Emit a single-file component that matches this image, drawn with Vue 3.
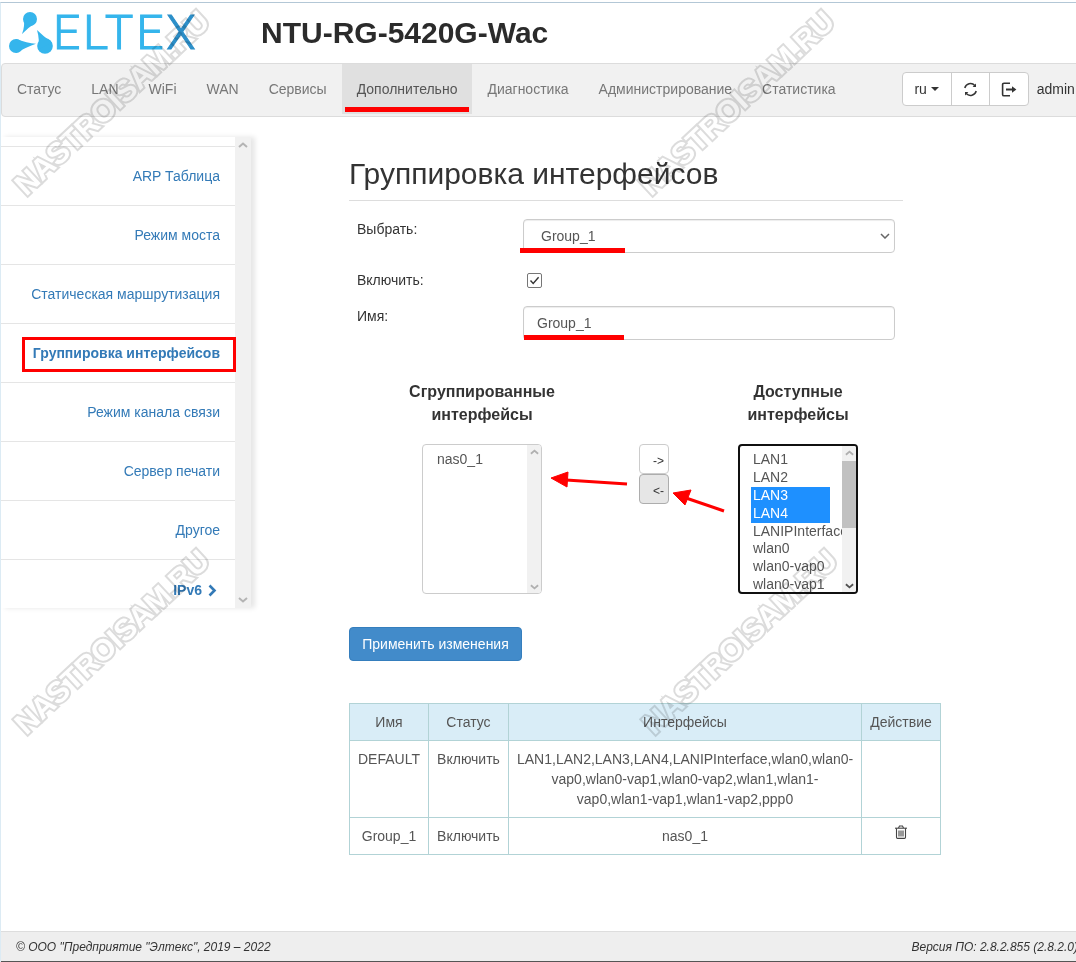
<script setup>
const tabs = ['Статус', 'LAN', 'WiFi', 'WAN', 'Сервисы', 'Дополнительно', 'Диагностика', 'Администрирование', 'Статистика']
const items = ['ARP Таблица', 'Режим моста', 'Статическая маршрутизация', 'Группировка интерфейсов', 'Режим канала связи', 'Сервер печати', 'Другое']
const options = ['LAN1', 'LAN2', 'LAN3', 'LAN4', 'LANIPInterface', 'wlan0', 'wlan0-vap0', 'wlan0-vap1']
const selected = ['LAN3', 'LAN4']
const marks = ['wm1', 'wm2', 'wm3', 'wm4']
</script>

<template>
  <div class="page">
    <div class="frame">
      <header class="top">
        <div class="logo">
          <svg class="logo-mark" width="55" height="50" viewBox="0 0 55 50">
            <g transform="translate(-1,-8)" fill="#35b5ec">
              <circle cx="30" cy="19" r="7" />
              <path d="M24 15.5 Q25 27 22 34 Q29 27 36 22.5 Z" />
              <circle cx="16" cy="46" r="7" />
              <path d="M16 39 Q27 43 36 43.8 Q27 47 16 53 Z" />
              <circle cx="45" cy="46" r="7.8" />
              <path d="M52 42.5 Q43 36 37 30 Q40 40 38 49.5 Z" />
            </g>
          </svg>
          <span class="logo-text">ELTE<span class="logo-x">X</span></span>
        </div>
        <div class="model">NTU-RG-5420G-Wac</div>
      </header>

      <nav class="nav">
        <ul class="tabs">
          <li v-for="t in tabs" :key="t" class="tab" :class="{ active: t === 'Дополнительно' }">{{ t }}</li>
        </ul>
        <div class="tools">
          <div class="tool lang">ru<span class="caret"></span></div>
          <div class="tool">
            <svg width="15" height="15" viewBox="0 0 15 15" fill="none" stroke="#333" stroke-width="1.5">
              <path d="M1.8 6 A5.9 5.9 0 0 1 11.8 3.4" />
              <path d="M13.2 9 A5.9 5.9 0 0 1 3.2 11.6" />
              <path d="M13 1.4 V5 H9.6 Z" fill="#333" stroke="none" />
              <path d="M2 13.6 V10 H5.4 Z" fill="#333" stroke="none" />
            </svg>
          </div>
          <div class="tool">
            <svg width="16" height="15" viewBox="0 0 16 15" fill="none" stroke="#333" stroke-width="1.6">
              <path d="M9 1.2 H3 Q1.6 1.2 1.6 2.6 V12.4 Q1.6 13.8 3 13.8 H9" />
              <path d="M5 7.5 H11.5" stroke-width="2" />
              <path d="M11 4.2 L15.4 7.5 L11 10.8 Z" fill="#333" stroke="none" />
            </svg>
          </div>
        </div>
        <span class="user">admin</span>
      </nav>

      <div class="body">
        <aside class="side">
          <div class="side-list">
            <div class="side-head"></div>
            <div v-for="i in items" :key="i" class="side-item" :class="{ current: i === 'Группировка интерфейсов' }">{{ i }}</div>
            <div class="side-sub">
              IPv6
              <svg width="9" height="13" viewBox="0 0 9 13" fill="none" stroke="#337ab7" stroke-width="2.6">
                <path d="M1.5 1.5 L6.5 6.5 L1.5 11.5" />
              </svg>
            </div>
          </div>
          <div class="scroll">
            <svg width="10" height="6" viewBox="0 0 10 6" fill="none" stroke="#b4b4b4" stroke-width="2"><path d="M1 5 L5 1.5 L9 5" /></svg>
            <svg width="10" height="6" viewBox="0 0 10 6" fill="none" stroke="#b4b4b4" stroke-width="2"><path d="M1 1 L5 4.5 L9 1" /></svg>
          </div>
        </aside>

        <main class="main">
          <h1 class="title">Группировка интерфейсов</h1>

          <div class="form-row first">
            <label class="lbl">Выбрать:</label>
            <div class="ctl sel">
              Group_1
              <svg width="10" height="6" viewBox="0 0 10 6" fill="none" stroke="#666" stroke-width="1.5"><path d="M1 1 L5 5 L9 1" /></svg>
            </div>
          </div>
          <div class="form-row check-row">
            <label class="lbl">Включить:</label>
            <span class="check">
              <svg width="13" height="13" viewBox="0 0 13 13" fill="none" stroke="#333" stroke-width="1.4"><path d="M2.5 6.5 L5.2 9.4 L10.6 3.2" /></svg>
            </span>
          </div>
          <div class="form-row">
            <label class="lbl">Имя:</label>
            <div class="ctl inp">Group_1</div>
          </div>

          <div class="lists">
            <div class="list-title c1">Сгруппированные<br />интерфейсы</div>
            <div class="list-title c3">Доступные<br />интерфейсы</div>
            <div class="listbox c1">
              <div class="opts"><div class="opt">nas0_1</div></div>
              <div class="lb-scroll">
                <svg width="9" height="6" viewBox="0 0 10 6" fill="none" stroke="#b0b0b0" stroke-width="2"><path d="M1 5 L5 1.5 L9 5" /></svg>
                <svg width="9" height="6" viewBox="0 0 10 6" fill="none" stroke="#b0b0b0" stroke-width="2"><path d="M1 1 L5 4.5 L9 1" /></svg>
              </div>
            </div>
            <div class="moves c2">
              <div class="move">-&gt;</div>
              <div class="move pressed">&lt;-</div>
            </div>
            <div class="listbox focus c3">
              <div class="opts">
                <div v-for="o in options" :key="o" class="opt" :class="{ sel: selected.includes(o) }">{{ o }}</div>
              </div>
              <div class="lb-scroll">
                <svg width="9" height="6" viewBox="0 0 10 6" fill="none" stroke="#b0b0b0" stroke-width="2"><path d="M1 5 L5 1.5 L9 5" /></svg>
                <span class="thumb"></span>
                <svg width="9" height="6" viewBox="0 0 10 6" fill="none" stroke="#505050" stroke-width="2"><path d="M1 1 L5 4.5 L9 1" /></svg>
              </div>
            </div>
          </div>

          <button class="apply" type="button">Применить изменения</button>

          <table class="grid">
            <colgroup>
              <col class="w1" /><col class="w2" /><col class="w3" /><col class="w4" />
            </colgroup>
            <thead>
              <tr><th>Имя</th><th>Статус</th><th>Интерфейсы</th><th>Действие</th></tr>
            </thead>
            <tbody>
              <tr class="r1">
                <td>DEFAULT</td>
                <td>Включить</td>
                <td>LAN1,LAN2,LAN3,LAN4,LANIPInterface,wlan0,wlan0-vap0,wlan0-vap1,wlan0-vap2,wlan1,wlan1-vap0,wlan1-vap1,wlan1-vap2,ppp0</td>
                <td></td>
              </tr>
              <tr class="r2">
                <td>Group_1</td>
                <td>Включить</td>
                <td class="mid">nas0_1</td>
                <td class="act">
                  <svg width="14" height="14" viewBox="0 0 13 14" fill="none" stroke="#444" stroke-width="1.1">
                    <path d="M0.5 3.2 H12.5" />
                    <path d="M4 3 L5 1 H8 L9 3" />
                    <path d="M2 3.2 V12.2 Q2 13.4 3 13.4 H10 Q11 13.4 11 12.2 V3.2" />
                    <path d="M4.5 5.5 V11.5 M6.5 5.5 V11.5 M8.5 5.5 V11.5" />
                  </svg>
                </td>
              </tr>
            </tbody>
          </table>
        </main>
      </div>

      <footer class="foot">
        <span>© ООО "Предприятие "Элтекс", 2019 – 2022</span>
        <span class="ver">Версия ПО: 2.8.2.855 (2.8.2.0)</span>
      </footer>
    </div>

    <span v-for="m in marks" :key="m" class="wm" :class="m">NASTROISAM.RU</span>

    <span class="ul u-tab"></span>
    <span class="ul u-sel"></span>
    <span class="ul u-inp"></span>
    <span class="box"></span>
    <svg class="arrows" width="1076" height="962" viewBox="0 0 1076 962">
      <g fill="#f00" stroke="#f00">
        <path d="M627 484 L566 480" stroke-width="3" />
        <path d="M551 478 L568 472 L567 487 Z" stroke-width="1" />
        <path d="M724 511 L686 498" stroke-width="3" />
        <path d="M673 493 L691 490 L685 505 Z" stroke-width="1" />
      </g>
    </svg>
  </div>
</template>

<style>
html, body { margin: 0; background: #fff; overflow: hidden; }
</style>

<style scoped>
.page {
  position: relative;
  width: 1076px;
  height: 962px;
  padding-top: 2px;
  box-sizing: border-box;
  overflow: hidden;
  background: #fff;
  font: 14px/20px "Liberation Sans", Arial, sans-serif;
  color: #333;
}
.frame {
  height: 960px;
  box-sizing: border-box;
  border-top: 1px solid #b3c7d6;
  border-left: 1px solid #dcebf4;
  display: flex;
  flex-direction: column;
  overflow: hidden;
}
.top {
  height: 60px;
  flex: none;
  display: flex;
  align-items: center;
}
.logo {
  width: 260px;
  display: flex;
  align-items: center;
  height: 50px;
}
.logo-mark { flex: none; }
.logo-text {
  margin-left: -3px;
  font: 300 48px/50px Roboto, sans-serif;
  color: #35b5ec;
  letter-spacing: 2.8px;
  -webkit-text-stroke: 1px #35b5ec;
}
.logo-x { color: #2c8fc9; -webkit-text-stroke: 1px #2c8fc9; }
.model {
  font-weight: 700;
  font-size: 30px;
  line-height: 34px;
  color: #2b2b2b;
}
.nav {
  flex: none;
  height: 54px;
  box-sizing: border-box;
  margin-right: -20px;
  background: #f1f1f1;
  border: 1px solid #dcdcdc;
  border-radius: 4px;
  display: flex;
  align-items: flex-start;
}
.tabs {
  display: flex;
  list-style: none;
  margin: 0;
  padding: 0;
}
.tab {
  padding: 15px 15px 15px;
  height: 50px;
  box-sizing: border-box;
  color: #777;
}
.tab.active {
  background: #e0e0e0;
  color: #555;
}
.tools {
  display: flex;
  margin: 8px 0 0 51px;
  height: 34px;
  background: #fff;
  border: 1px solid #ccc;
  border-radius: 4px;
  box-sizing: border-box;
}
.tool {
  width: 38.5px;
  display: flex;
  align-items: center;
  justify-content: center;
  border-left: 1px solid #ccc;
  box-sizing: border-box;
}
.tool.lang { width: 48px; border-left: 0; color: #333; }
.caret {
  display: inline-block;
  margin-left: 4px;
  border-top: 4px solid #333;
  border-left: 4px solid transparent;
  border-right: 4px solid transparent;
}
.user { margin: 15px 0 0 8px; color: #333; }
.body {
  flex: 1;
  min-height: 0;
  display: flex;
  align-items: flex-start;
}
.side {
  flex: none;
  width: 250px;
  height: 471px;
  margin-top: 20px;
  display: flex;
  box-shadow: 4px 0 5px rgba(0, 0, 0, 0.1);
}
.side-list { width: 234px; flex: none; }
.side-head { height: 9px; border-bottom: 1px solid #e5e5e5; }
.side-item {
  height: 59px;
  box-sizing: border-box;
  border-bottom: 1px solid #e5e5e5;
  padding-right: 15px;
  line-height: 59px;
  text-align: right;
  color: #337ab7;
}
.side-item.current { font-weight: 700; }
.side-sub {
  display: flex;
  align-items: center;
  justify-content: flex-end;
  gap: 6px;
  height: 60px;
  padding-right: 18px;
  font-weight: 700;
  color: #337ab7;
}
.scroll {
  flex: none;
  width: 16px;
  background: #f1f1f1;
  display: flex;
  flex-direction: column;
  align-items: center;
  justify-content: space-between;
  padding: 5px 0;
  box-sizing: border-box;
}
.main {
  flex: none;
  width: 592px;
  margin-left: 98px;
}
.title {
  width: 554px;
  margin: 40px 0 0;
  padding-bottom: 9px;
  border-bottom: 1px solid #ddd;
  font-size: 30px;
  font-weight: 400;
  line-height: 34px;
  color: #333;
}
.form-row {
  display: flex;
  width: 546px;
  padding-left: 8px;
}
.form-row.first { margin-top: 18px; }
.check-row { margin-top: 17px; margin-bottom: 16px; align-items: center; height: 20px; }
.lbl { width: 166px; flex: none; }
.ctl {
  width: 372px;
  height: 34px;
  box-sizing: border-box;
  border: 1px solid #ccc;
  border-radius: 4px;
  display: flex;
  align-items: center;
  color: #555;
  box-shadow: inset 0 1px 1px rgba(0, 0, 0, 0.075);
}
.sel { padding: 0 4px 0 17px; justify-content: space-between; }
.inp { padding-left: 13px; }
.check {
  width: 13px;
  height: 13px;
  margin-left: 4px;
  border: 1px solid #767676;
  border-radius: 2px;
  box-sizing: content-box;
  display: block;
}
.check svg { display: block; }
.lists {
  margin: 40px 0 0 43px;
  display: grid;
  row-gap: 18px;
  width: 496px;
  grid-template-columns: 180px 67px 30px 39px 180px;
}
.c1 { grid-column: 1; }
.c2 { grid-column: 3; }
.c3 { grid-column: 5; }
.list-title {
  grid-row: 1;
  text-align: center;
  font-weight: 700;
  font-size: 16px;
  line-height: 23px;
}
.listbox {
  grid-row: 2;
  justify-self: center;
  width: 120px;
  height: 150px;
  box-sizing: border-box;
  border: 1px solid #ccc;
  border-radius: 4px;
  display: flex;
  overflow: hidden;
  background: #fff;
}
.listbox.focus { border: 2px solid #101010; }
.opts {
  flex: 1;
  min-width: 0;
  padding: 6px 12px 0 14px;
  overflow: hidden;
}
.focus .opts { padding: 5px 12px 0 13px; }
.opt {
  line-height: 17.8px;
  height: 17.8px;
  color: #555;
  white-space: nowrap;
}
.opt.sel { background: #1e90ff; color: #fff; height: 18px; margin-left: -2px; padding-left: 2px; }
.lb-scroll {
  flex: none;
  width: 14px;
  background: #f1f1f1;
  display: flex;
  flex-direction: column;
  align-items: center;
  justify-content: space-between;
  padding: 4px 0 3px;
  box-sizing: border-box;
}
.thumb {
  flex: 1;
  align-self: stretch;
  margin: 5px 0 55px;
  background: #c1c1c1;
}
.moves {
  grid-row: 2;
  display: flex;
  flex-direction: column;
}
.move {
  width: 30px;
  height: 30px;
  box-sizing: border-box;
  border: 1px solid #ccc;
  border-radius: 4px;
  background: #fff;
  font-size: 12px;
  line-height: 32px;
  text-align: right;
  padding-right: 4px;
  color: #333;
}
.move.pressed { background: #e6e6e6; border-color: #adadad; }
.apply {
  display: block;
  margin: 33px 0 0;
  width: 173px;
  height: 34px;
  padding: 0;
  background: #428bca;
  border: 1px solid #357ebd;
  border-radius: 4px;
  color: #fff;
  font: 14px/20px "Liberation Sans", Arial, sans-serif;
}
.grid {
  margin-top: 42px;
  width: 591px;
  table-layout: fixed;
  border-collapse: collapse;
  text-align: center;
}
.w1 { width: 79px; }
.w2 { width: 80px; }
.w3 { width: 353px; }
.w4 { width: 79px; }
.grid th, .grid td {
  border: 1px solid #b2d3d6;
  padding: 8px;
  vertical-align: top;
  font-weight: 400;
  color: #555;
}
.grid th { background: #d9edf7; height: 37px; box-sizing: border-box; }
.r2 td { height: 37px; box-sizing: border-box; }
.act svg { display: block; margin: -1px auto 0; }
.foot {
  flex: none;
  margin-top: auto;
  height: 29px;
  background: #eee;
  border-top: 1px solid #ddd;
  border-bottom: 1px solid #555;
  box-sizing: content-box;
  display: flex;
  justify-content: space-between;
  align-items: center;
  padding-left: 15px;
  font-size: 12px;
  font-style: italic;
  color: #333;
}
.ver { margin-right: -2px; }
.wm {
  position: absolute;
  transform: translate(-50%, -50%) rotate(-43deg);
  font: 700 30px/34px "Liberation Sans", Arial, sans-serif;
  color: #fff;
  -webkit-text-stroke: 4px #dcdcdc;
  paint-order: stroke fill;
  mix-blend-mode: multiply;
  white-space: nowrap;
  pointer-events: none;
}
.wm1 { left: 112px; top: 103px; }
.wm2 { left: 737px; top: 103px; }
.wm3 { left: 112px; top: 642px; }
.wm4 { left: 740px; top: 642px; }
.ul { position: absolute; background: #f00; }
.u-tab { left: 345px; top: 107px; width: 124px; height: 5px; }
.u-sel { left: 520px; top: 248px; width: 105px; height: 5px; }
.u-inp { left: 524px; top: 335px; width: 100px; height: 5px; }
.box {
  position: absolute;
  left: 22px;
  top: 337px;
  width: 214px;
  height: 35px;
  box-sizing: border-box;
  border: 3px solid #f00;
}
.arrows { position: absolute; left: 0; top: 0; pointer-events: none; }
</style>
